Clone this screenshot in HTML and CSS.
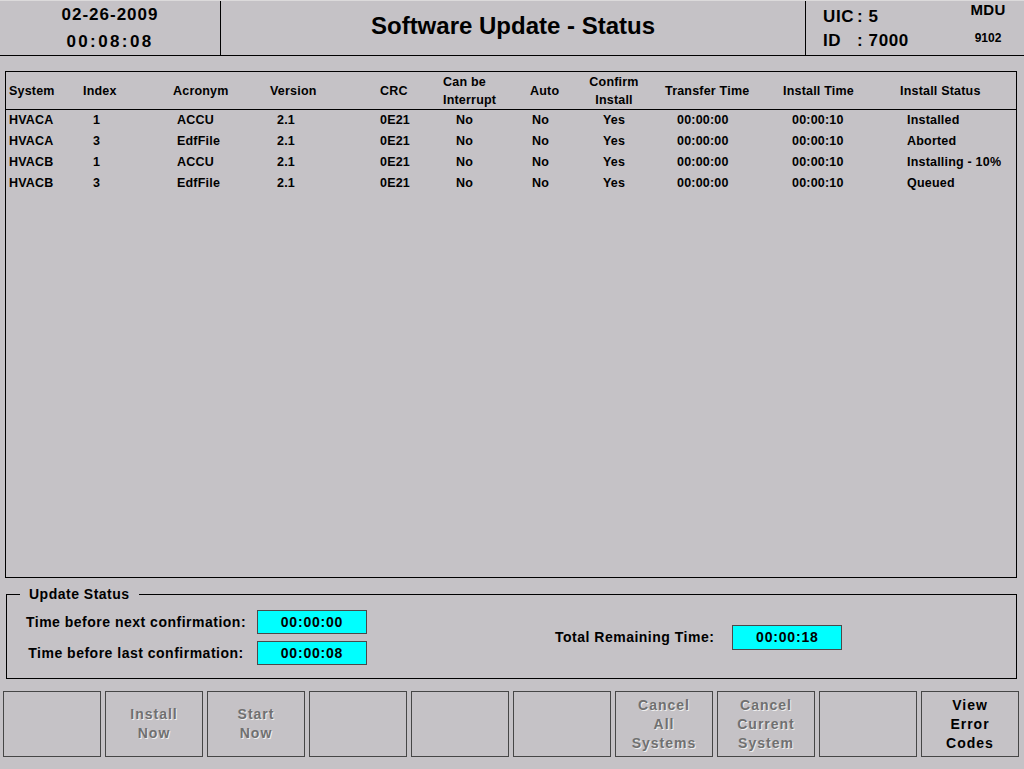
FILE: index.html
```html
<!DOCTYPE html>
<html>
<head>
<meta charset="utf-8">
<title>Software Update - Status</title>
<link rel="stylesheet" href="styles.css">
</head>
<body>
<div class="screen">
  <header class="topbar">
    <div class="datetime">
      <div class="date">02-26-2009</div>
      <div class="time">00:08:08</div>
    </div>
    <div class="title">Software Update - Status</div>
    <div class="ident">
      <div class="uic">
        <span>UIC</span><span>: 5</span>
        <span>ID</span><span>: 7000</span>
      </div>
      <div class="mdu">
        <div class="mdu-name">MDU</div>
        <div class="mdu-num">9102</div>
      </div>
    </div>
  </header>

  <section class="table">
    <div class="row thead">
      <span>System</span>
      <span>Index</span>
      <span>Acronym</span>
      <span>Version</span>
      <span>CRC</span>
      <span>Can be<br>Interrupt</span>
      <span>Auto</span>
      <span>Confirm<br>Install</span>
      <span>Transfer Time</span>
      <span>Install Time</span>
      <span>Install Status</span>
    </div>
    <div class="tbody">
      <div class="row">
        <span>HVACA</span><span>1</span><span>ACCU</span><span>2.1</span><span>0E21</span><span>No</span><span>No</span><span>Yes</span><span>00:00:00</span><span>00:00:10</span><span>Installed</span>
      </div>
      <div class="row">
        <span>HVACA</span><span>3</span><span>EdfFile</span><span>2.1</span><span>0E21</span><span>No</span><span>No</span><span>Yes</span><span>00:00:00</span><span>00:00:10</span><span>Aborted</span>
      </div>
      <div class="row">
        <span>HVACB</span><span>1</span><span>ACCU</span><span>2.1</span><span>0E21</span><span>No</span><span>No</span><span>Yes</span><span>00:00:00</span><span>00:00:10</span><span>Installing - 10%</span>
      </div>
      <div class="row">
        <span>HVACB</span><span>3</span><span>EdfFile</span><span>2.1</span><span>0E21</span><span>No</span><span>No</span><span>Yes</span><span>00:00:00</span><span>00:00:10</span><span>Queued</span>
      </div>
    </div>
  </section>

  <section class="update">
    <span class="legend">Update Status</span>
    <div class="confirm">
      <div class="field">
        <span class="label">Time before next confirmation:</span>
        <span class="value">00:00:00</span>
      </div>
      <div class="field">
        <span class="label">Time before last confirmation:</span>
        <span class="value">00:00:08</span>
      </div>
    </div>
    <div class="total">
      <span class="total-label">Total Remaining Time:</span>
      <span class="value">00:00:18</span>
    </div>
  </section>

  <nav class="buttons">
    <div class="btn"></div>
    <div class="btn disabled">Install<br>Now</div>
    <div class="btn disabled">Start<br>Now</div>
    <div class="btn"></div>
    <div class="btn"></div>
    <div class="btn"></div>
    <div class="btn disabled">Cancel<br>All<br>Systems</div>
    <div class="btn disabled">Cancel<br>Current<br>System</div>
    <div class="btn"></div>
    <div class="btn">View<br>Error<br>Codes</div>
  </nav>
</div>
</body>
</html>
```

FILE: styles.css
```css
* { box-sizing: border-box; }

html, body {
  margin: 0;
  padding: 0;
  background: #c5c2c6;
}

body {
  width: 1024px;
  height: 769px;
  overflow: hidden;
  font-family: "Liberation Sans", Arial, sans-serif;
  font-weight: bold;
  color: #000;
}

.screen {
  display: flex;
  flex-direction: column;
  width: 1024px;
  height: 769px;
}

/* ---------- top bar ---------- */
.topbar {
  display: grid;
  grid-template-columns: 221px 585px 1fr;
  height: 56px;
  border-top: 1px solid #dcdadb;
  border-bottom: 1px solid #000;
}

.datetime {
  border-right: 1px solid #000;
  text-align: center;
  font-size: 17px;
  line-height: 27px;
}

.date { letter-spacing: 1px; }
.time { letter-spacing: 2.4px; }

.title {
  border-right: 1px solid #000;
  display: flex;
  align-items: center;
  justify-content: center;
  padding-bottom: 4px;
  font-size: 24px;
}

.ident {
  display: flex;
  justify-content: space-between;
}

.uic {
  display: grid;
  grid-template-columns: 34px auto;
  align-content: start;
  padding: 4px 0 0 17px;
  font-size: 17px;
  line-height: 24px;
  letter-spacing: 0.6px;
  white-space: pre;
}

.mdu {
  width: 52px;
  margin-right: 10px;
  text-align: center;
}

.mdu-name {
  font-size: 15px;
  line-height: 18px;
  letter-spacing: 0.3px;
}

.mdu-num {
  margin-top: 11px;
  font-size: 12px;
  line-height: 16px;
}

/* ---------- table ---------- */
.table {
  margin: 15px 0 0 5px;
  width: 1012px;
  height: 507px;
  border: 1px solid #000;
  font-size: 12.5px;
  letter-spacing: 0.2px;
}

.row {
  display: grid;
  grid-template-columns: 74px 90px 95px 105px 60px 85px 60px 78px 117px 115px 1fr;
  align-items: center;
  height: 21px;
  white-space: nowrap;
}

.tbody .row {
  padding-bottom: 2px;
}

.thead {
  height: 38px;
  line-height: 18px;
  border-bottom: 1px solid #000;
}

.thead > span:nth-child(1) { padding-left: 3px; }
.thead > span:nth-child(2) { padding-left: 3px; }
.thead > span:nth-child(3) { padding-left: 3px; }
.thead > span:nth-child(4) { padding-left: 5px; }
.thead > span:nth-child(5) { padding-left: 10px; }
.thead > span:nth-child(6) { padding-left: 13px; }
.thead > span:nth-child(7) { padding-left: 15px; }
.thead > span:nth-child(8) { text-align: center; }
.thead > span:nth-child(9) { padding-left: 12px; }
.thead > span:nth-child(10) { padding-left: 13px; }
.thead > span:nth-child(11) { padding-left: 15px; }

.tbody .row > span:nth-child(1) { padding-left: 3px; }
.tbody .row > span:nth-child(2) { padding-left: 13px; }
.tbody .row > span:nth-child(3) { padding-left: 7px; }
.tbody .row > span:nth-child(4) { padding-left: 12px; }
.tbody .row > span:nth-child(5) { padding-left: 10px; }
.tbody .row > span:nth-child(6) { padding-left: 26px; }
.tbody .row > span:nth-child(7) { padding-left: 17px; }
.tbody .row > span:nth-child(8) { text-align: center; }
.tbody .row > span:nth-child(9) { padding-left: 24px; }
.tbody .row > span:nth-child(10) { padding-left: 22px; }
.tbody .row > span:nth-child(11) { padding-left: 22px; }

/* ---------- update status ---------- */
.update {
  position: relative;
  margin: 16px 0 0 6px;
  width: 1011px;
  height: 85px;
  border: 1px solid #000;
  display: flex;
  align-items: center;
  padding: 1px 0 0 13px;
  font-size: 14px;
  letter-spacing: 0.5px;
}

.legend {
  position: absolute;
  top: -10px;
  left: 13px;
  padding: 0 9px;
  line-height: 18px;
  background: #c5c2c6;
}

.confirm {
  display: flex;
  flex-direction: column;
  gap: 7px;
}

.field {
  display: flex;
  align-items: center;
  gap: 5px;
}

.label {
  width: 232px;
  text-align: center;
}

.value {
  width: 110px;
  height: 24px;
  line-height: 22px;
  border: 1px solid #4a4a4a;
  background: #00ffff;
  text-align: center;
  letter-spacing: 0.8px;
}

.total {
  display: flex;
  align-items: center;
  gap: 18px;
  margin-left: 188px;
}

.total .value {
  height: 25px;
  line-height: 23px;
}

/* ---------- buttons ---------- */
.buttons {
  display: flex;
  gap: 4px;
  margin: 12px 0 0 3px;
}

.btn {
  width: 98px;
  height: 66px;
  border: 1px solid #464646;
  display: flex;
  align-items: center;
  justify-content: center;
  text-align: center;
  font-size: 14px;
  line-height: 19px;
  letter-spacing: 1px;
  color: #000;
}

.btn.disabled {
  color: #707070;
  text-shadow: 1px 1px 0 #efefef;
}
```
